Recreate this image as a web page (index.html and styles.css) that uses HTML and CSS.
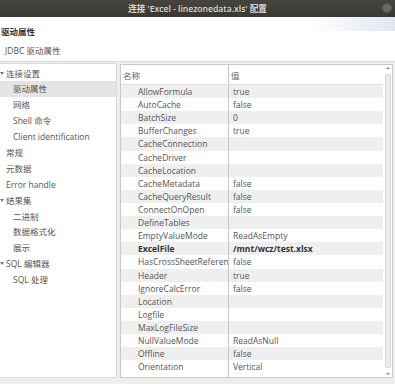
FILE: index.html
```html
<!DOCTYPE html>
<html>
<head>
<meta charset="utf-8">
<link rel="stylesheet" href="styles.css">
</head>
<body>
<div class="window">
  <div class="titlebar">
    <span class="title">连接 'Excel - linezonedata.xls' 配置</span>
    <span class="close"></span>
  </div>
  <div class="header">
    <div class="h-title">驱动属性</div>
    <div class="h-sub">JDBC 驱动属性</div>
  </div>
  <div class="main">
    <div class="tree">
      <div class="node top open">连接设置</div>
      <div class="node child selected">驱动属性</div>
      <div class="node child">网络</div>
      <div class="node child">Shell 命令</div>
      <div class="node child">Client identification</div>
      <div class="node top">常规</div>
      <div class="node top">元数据</div>
      <div class="node top">Error handle</div>
      <div class="node top open">结果集</div>
      <div class="node child">二进制</div>
      <div class="node child">数据格式化</div>
      <div class="node child">展示</div>
      <div class="node top open">SQL 编辑器</div>
      <div class="node child">SQL 处理</div>
    </div>
    <div class="panel">
      <div class="table">
        <div class="grid">
          <div class="hdr"><div class="hname">名称</div><div class="hval">值</div></div>
          <div class="row odd"><div class="name">AllowFormula</div><div class="val">true</div></div>
          <div class="row"><div class="name">AutoCache</div><div class="val">false</div></div>
          <div class="row odd"><div class="name">BatchSize</div><div class="val">0</div></div>
          <div class="row"><div class="name">BufferChanges</div><div class="val">true</div></div>
          <div class="row odd"><div class="name">CacheConnection</div><div class="val"></div></div>
          <div class="row"><div class="name">CacheDriver</div><div class="val"></div></div>
          <div class="row odd"><div class="name">CacheLocation</div><div class="val"></div></div>
          <div class="row"><div class="name">CacheMetadata</div><div class="val">false</div></div>
          <div class="row odd"><div class="name">CacheQueryResult</div><div class="val">false</div></div>
          <div class="row"><div class="name">ConnectOnOpen</div><div class="val">false</div></div>
          <div class="row odd"><div class="name">DefineTables</div><div class="val"></div></div>
          <div class="row"><div class="name">EmptyValueMode</div><div class="val">ReadAsEmpty</div></div>
          <div class="row odd bold"><div class="name">ExcelFile</div><div class="val">/mnt/wcz/test.xlsx</div></div>
          <div class="row"><div class="name">HasCrossSheetReference</div><div class="val">false</div></div>
          <div class="row odd"><div class="name">Header</div><div class="val">true</div></div>
          <div class="row"><div class="name">IgnoreCalcError</div><div class="val">false</div></div>
          <div class="row odd"><div class="name">Location</div><div class="val"></div></div>
          <div class="row"><div class="name">Logfile</div><div class="val"></div></div>
          <div class="row odd"><div class="name">MaxLogFileSize</div><div class="val"></div></div>
          <div class="row"><div class="name">NullValueMode</div><div class="val">ReadAsNull</div></div>
          <div class="row odd"><div class="name">Offline</div><div class="val">false</div></div>
          <div class="row"><div class="name">Orientation</div><div class="val">Vertical</div></div>
          <div class="filler"><div class="name"></div><div class="val"></div></div>
        </div>
        <div class="vscroll">
          <div class="arrow up"></div>
          <div class="thumb"></div>
          <div class="arrow down"></div>
        </div>
      </div>
    </div>
  </div>
</div>
</body>
</html>
```

FILE: styles.css
```css
* { box-sizing: border-box; }
html, body { margin: 0; padding: 0; }
body {
  width: 395px;
  height: 384px;
  overflow: hidden;
  background: #efeeed;
  font-family: "Open Sans", "Noto Sans CJK SC", sans-serif;
  font-size: 8.5px;
  color: #555;
}
.window { display: flex; flex-direction: column; height: 384px; }
.titlebar {
  height: 17px;
  background: linear-gradient(#46443f, #393834);
  display: flex;
  align-items: center;
  justify-content: center;
  position: relative;
}
.title { color: #dcd8cf; font-size: 8.6px; font-weight: 600; }
.close {
  position: absolute;
  right: 3px;
  top: 3px;
  width: 10px;
  height: 10px;
  border-radius: 50%;
  background: radial-gradient(#6b6a66 40%, #55544f 70%);
}
.header {
  height: 45px;
  background: linear-gradient(100deg, #fff 0%, #fff 78%, #dfe7f3 100%) top / 100% 14px no-repeat, #fff;
  border-bottom: 1px solid #d9d9d9;
  padding-top: 9px;
}
.h-title { font-weight: 700; color: #333; font-size: 8.5px; line-height: 11px; padding-left: 1px; }
.h-sub { color: #555; margin-top: 8px; line-height: 11px; padding-left: 5px; }
.main { display: flex; flex: 1; padding: 1px 0 6px 0; }
.tree {
  width: 117px;
  background: #fff;
  border: 1px solid #dcdcdc;
  border-left: none;
  padding-top: 1.5px;
}
.node { height: 15.9px; line-height: 15.9px; white-space: nowrap; position: relative; }
.top { padding-left: 6px; }
.child { padding-left: 13px; }
.open::before {
  content: "";
  position: absolute;
  left: 0px;
  top: 6px;
  border-left: 2px solid transparent;
  border-right: 2px solid transparent;
  border-top: 3px solid #777;
}
.selected { background: #e4e4e4; }
.panel { flex: 1; padding: 1px 2px 0 3px; display: flex; }
.table {
  flex: 1;
  display: flex;
  background: #fff;
  border: 1px solid #c9c9c9;
}
.grid { flex: 1; display: flex; flex-direction: column; }
.hdr { height: 20px; display: flex; align-items: center; color: #666; border-bottom: 1px solid #e2e2e2; }
.hname { width: 107px; padding-left: 2px; }
.hval { flex: 1; padding-left: 2px; border-left: 1px solid #c6c6c6; height: 100%; display: flex; align-items: center; }
.row { height: 13.12px; display: flex; align-items: center; }
.row.odd { background: #efefef; }
.name { width: 107px; padding-left: 17px; white-space: nowrap; overflow: hidden; }
.val { flex: 1; padding-left: 4px; border-left: 1px solid #c6c6c6; height: 100%; display: flex; align-items: center; white-space: nowrap; }
.bold { font-weight: 700; color: #333; }
.filler { flex: 1; display: flex; }
.vscroll {
  width: 9px;
  padding: 1px 1px 1px 2px;
  display: flex;
  flex-direction: column;
}
.thumb { flex: 1; background: #ececec; border: 1px solid #d6d6d6; border-radius: 2px; margin: 2px 0; }
.arrow { height: 6px; position: relative; }
.arrow::after {
  content: "";
  position: absolute;
  left: 1px;
  border-left: 2px solid transparent;
  border-right: 2px solid transparent;
}
.arrow.up::after { top: 1px; border-bottom: 2px solid #888; }
.arrow.down::after { bottom: 1px; border-top: 2px solid #888; }
```
